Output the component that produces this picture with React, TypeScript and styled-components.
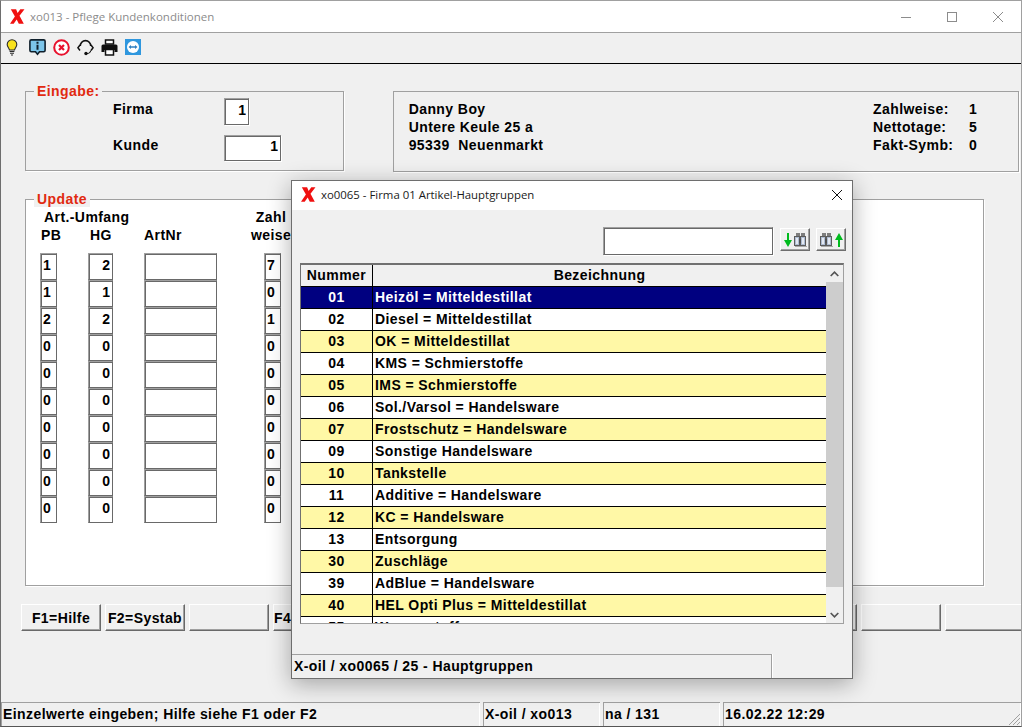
import React from "react";
import styled, { createGlobalStyle } from "styled-components";

const GlobalStyle = createGlobalStyle`
  html, body {
    margin: 0;
    padding: 0;
    background: #f0f0f0;
  }
  * {
    box-sizing: border-box;
  }
`;

const FONT = `"Liberation Sans", Arial, sans-serif`;
const UI_FONT = `"Open Sans", "Noto Sans", sans-serif`;
const TRACKING = "0.42px";

const Window = styled.div`
  position: relative;
  width: 1022px;
  height: 727px;
  overflow: hidden;
  display: flex;
  flex-direction: column;
  background: #f0f0f0;
  border-top: 1px solid #a0a0a0;
  border-left: 1px solid #6e6e6e;
  border-right: 1px solid #a0a0a0;
  border-bottom: 1px solid #555;
  font: bold 14px/18px ${FONT};
  letter-spacing: ${TRACKING};
  color: #000;
`;

const TitleBar = styled.div`
  flex: none;
  height: 32px;
  display: flex;
  align-items: center;
  background: #fff;
  border-bottom: 1px solid #a0a0a0;
  padding-left: 9px;
`;

const TitleText = styled.span<{ $dim?: boolean }>`
  margin-left: 5px;
  font: 400 ${(p) => (p.$dim ? "11.5px" : "11.4px")}/16px ${UI_FONT};
  letter-spacing: 0;
  color: ${(p) => (p.$dim ? "#8c8c8c" : "#1a1a1a")};
`;

const WindowControls = styled.div`
  margin-left: auto;
  display: flex;
  align-items: center;
  gap: 36px;
  padding-right: 18px;
`;

const Toolbar = styled.div`
  flex: none;
  height: 31px;
  display: flex;
  align-items: center;
  gap: 7px;
  padding: 0 0 2px 4px;
  border-bottom: 1px solid #000;
`;

const Body = styled.div`
  flex: 1;
  display: flex;
  flex-direction: column;
  padding: 19px 2px 0 24px;
`;

const TopRow = styled.div`
  display: flex;
  align-items: flex-start;
  gap: 49px;
`;

const Group = styled.fieldset<{ $w: number; $h: number; $fill?: string; $gapTop?: number }>`
  margin: ${(p) => p.$gapTop || 0}px 0 0;
  padding: 0;
  min-width: 0;
  width: ${(p) => p.$w}px;
  height: ${(p) => p.$h}px;
  border: 1px solid #a0a0a0;
  background: ${(p) => p.$fill || "transparent"};
  box-shadow: 1px 1px 0 #fff;
`;

const GroupTitle = styled.legend`
  margin-left: 8px;
  padding: 0 3px;
  background: #f0f0f0;
  color: #e12a10;
  font: bold 14px/16px ${FONT};
  letter-spacing: ${TRACKING};
`;

const EntryStack = styled.div`
  margin-top: -1px;
`;

const EntryRow = styled.div`
  display: flex;
  padding-left: 87px;
  margin-bottom: 10px;
`;

const EntryLabel = styled.span<{ $top: number }>`
  width: 111px;
  padding-top: ${(p) => p.$top}px;
`;

const Field = styled.input<{ $w: number; $h?: number; $right?: boolean }>`
  display: block;
  width: ${(p) => p.$w}px;
  height: ${(p) => p.$h || 27}px;
  margin: 0;
  padding: 0 2px 4px;
  outline: none;
  background: #fff;
  border: 1px solid;
  border-color: #a0a0a0 #696969 #696969 #a0a0a0;
  box-shadow: inset 1px 1px 0 #696969, 1px 1px 0 #fff;
  border-radius: 0;
  font: bold 14px/18px ${FONT};
  color: #000;
  text-align: ${(p) => (p.$right ? "right" : "left")};
`;

const InfoBox = styled.div`
  width: 627px;
  height: 81px;
  margin-top: 8px;
  display: flex;
  justify-content: space-between;
  padding: 8px 0 0 15px;
  border: 1px solid #a0a0a0;
  box-shadow: 1px 1px 0 #fff;
`;

const InfoLines = styled.div`
  display: flex;
  flex-direction: column;
`;

const TermsGrid = styled.div`
  width: 145px;
  display: grid;
  grid-template-columns: 96px 1fr;
  align-content: start;
`;

const UpdateHead = styled.div`
  display: grid;
  grid-template-columns: 48px 56px 105px 44px;
  padding: 1px 0 0 14px;
  margin-bottom: 9px;
`;

const HeadSpan = styled.span`
  grid-column: 1 / span 3;
  margin-left: 4px;
`;

const HeadCell = styled.span<{ $center?: boolean; $shift?: number }>`
  text-align: ${(p) => (p.$center ? "center" : "left")};
  margin-left: ${(p) => p.$shift || 0}px;
  white-space: nowrap;
`;

const UpdateRows = styled.div`
  display: grid;
  grid-template-columns: 48px 56px 120px 17px;
  padding-left: 14px;
`;

const FKeys = styled.div`
  display: flex;
  gap: 4px;
  margin: 18px 0 0 -4px;
`;

const FKey = styled.button`
  flex: none;
  width: 80px;
  height: 27px;
  padding: 0;
  background: #f0f0f0;
  border: 1px solid;
  border-color: #fff #696969 #696969 #fff;
  box-shadow: inset -1px -1px 0 #a0a0a0;
  border-radius: 0;
  font: bold 14px/18px ${FONT};
  letter-spacing: ${TRACKING};
  color: #000;
  white-space: nowrap;
  overflow: hidden;
`;

const StatusBar = styled.div`
  flex: none;
  height: 24px;
  display: flex;
  gap: 3px;
`;

const StatusCell = styled.div<{ $w: number }>`
  position: relative;
  width: ${(p) => p.$w}px;
  flex: ${(p) => (p.$w ? "none" : "1")};
  padding: 2px 0 0 1px;
  border-top: 1px solid #a0a0a0;
  border-left: 1px solid #a0a0a0;
  box-shadow: inset -1px 0 0 #fff;
  white-space: nowrap;
`;

const Grip = styled.svg`
  position: absolute;
  right: 0;
  bottom: 0;
`;

const Dialog = styled.div`
  position: absolute;
  left: 290px;
  top: 179px;
  width: 562px;
  height: 499px;
  display: flex;
  flex-direction: column;
  background: #f0f0f0;
  border: 1px solid #6e6e6e;
  box-shadow: 0 5px 22px rgba(0, 0, 0, 0.32);
`;

const DialogTitle = styled.div`
  flex: none;
  height: 29px;
  display: flex;
  align-items: center;
  padding: 0 10px 2px 9px;
  background: #fff;
`;

const CloseWrap = styled.div`
  margin-left: auto;
  display: flex;
`;

const SearchRow = styled.div`
  flex: none;
  display: flex;
  justify-content: flex-end;
  align-items: flex-start;
  gap: 6px;
  padding: 17px 6px 0 0;
  height: 53px;
`;

const SearchSlot = styled.div`
  margin-right: 1px;
`;

const SearchButton = styled.button`
  width: 30px;
  height: 23px;
  margin-top: 1px;
  padding: 0;
  display: flex;
  align-items: center;
  justify-content: center;
  background: #f0f0f0;
  border: 1px solid;
  border-color: #fff #6e6e6e #6e6e6e #fff;
  box-shadow: inset -1px -1px 0 #a0a0a0;
  border-radius: 0;
`;

const ListFrame = styled.div`
  flex: none;
  margin-left: 8px;
  width: 544px;
  height: 361px;
  display: flex;
  background: #fff;
  border: 1px solid;
  border-width: 2px 1px 1px;
  border-color: #707070 #a0a0a0 #a0a0a0 #707070;
  overflow: hidden;
`;

const ListBody = styled.div`
  flex: 1;
  min-width: 0;
  background: #fff;
`;

const ListHeader = styled.div`
  display: grid;
  grid-template-columns: 72px 1fr;
  height: 22px;
  background: #f0f0f0;
  border-bottom: 1px solid #000;
`;

const HeaderCell = styled.div<{ $last?: boolean }>`
  text-align: center;
  line-height: 20px;
  border-right: ${(p) => (p.$last ? "none" : "1px solid #000")};
`;

const ListRow = styled.div<{ $tone: "sel" | "alt" | "plain" }>`
  display: grid;
  grid-template-columns: 72px 1fr;
  height: 22px;
  border-bottom: 1px solid #000;
  line-height: 20px;
  background: ${(p) =>
    p.$tone === "sel" ? "#000080" : p.$tone === "alt" ? "#fff8a6" : "#fff"};
  color: ${(p) => (p.$tone === "sel" ? "#fff" : "#000")};
`;

const NumCell = styled.div`
  text-align: center;
  border-right: 1px solid #000;
`;

const TextCell = styled.div`
  padding-left: 2px;
  white-space: nowrap;
`;

const ScrollBar = styled.div`
  flex: none;
  width: 17px;
  display: flex;
  flex-direction: column;
  background: #f0f0f0;
`;

const ScrollButton = styled.div`
  flex: none;
  height: 17px;
  display: flex;
  align-items: center;
  justify-content: center;
`;

const ScrollThumb = styled.div`
  flex: none;
  height: 305px;
  background: #cdcdcd;
`;

const ScrollTrack = styled.div`
  flex: 1;
`;

const DialogStatus = styled.div`
  margin-top: auto;
  width: 480px;
  height: 24px;
  padding: 2px 0 0 2px;
  border-top: 1px solid #a0a0a0;
  border-right: 1px solid #a0a0a0;
  box-shadow: 1px 0 0 #fff;
  white-space: nowrap;
`;

const XLogo = () => (
  <svg width="15" height="15" viewBox="0 0 15 15">
    <path
      d="M.8 .3h5.300l1.500 3.700L10.300 .3h4.200L9.500 6.800l4.300 7.900H8.800L6.700 10.500l-3 4.200H0l4.900-7.300z"
      fill="#f01010"
    />
  </svg>
);

const Bulb = () => (
  <svg width="17" height="17" viewBox="0 0 17 17">
    <path
      d="M7 .8a4.800 4.800 0 0 0-4.800 4.800c0 2.200 1.700 3 2.300 5.400h5c.6-2.400 2.300-3.200 2.300-5.400A4.800 4.800 0 0 0 7 .8z"
      fill="#f9e21c"
      stroke="#2a2a2a"
      strokeWidth="1.100"
    />
    <path d="M4.600 12.500h4.800M5 14.200h4M6 16h2" stroke="#2a2a2a" strokeWidth="1.100" />
  </svg>
);

const InfoBubble = () => (
  <svg width="17" height="17" viewBox="0 0 17 17">
    <path
      d="M2.300 .9h12.400a1.400 1.400 0 0 1 1.400 1.400v9a1.400 1.400 0 0 1-1.400 1.400h-4.200l-2 2.600-2-2.600H2.300A1.400 1.400 0 0 1 .9 11.300v-9A1.400 1.400 0 0 1 2.300 .9z"
      fill="#7cc5ea"
      stroke="#10202c"
      strokeWidth="1.600"
    />
    <path d="M7.500 2.800h2v2h-2zM7.500 5.800h2v5h-2z" fill="#10202c" />
  </svg>
);

const StopCircle = () => (
  <svg width="17" height="17" viewBox="0 0 17 17">
    <circle cx="8.500" cy="8.500" r="7.300" fill="#fff" stroke="#e8112d" strokeWidth="2" />
    <path d="M6 6l5 5M11 6l-5 5" stroke="#e8112d" strokeWidth="2.200" />
  </svg>
);

const Headset = () => (
  <svg width="17" height="17" viewBox="0 0 17 17" fill="none">
    <path d="M3.200 7a5.300 5.300 0 0 1 10.600 0" stroke="#111" strokeWidth="1.700" />
    <path d="M3 6L.9 8.800 3 11.500M14 6l2.100 2.800L14 11.500" stroke="#111" strokeWidth="1.500" />
    <path d="M13.800 11.500c-.4 2-2.200 3-4 3" stroke="#111" strokeWidth="1.100" />
    <circle cx="9" cy="14.500" r="1.700" fill="#111" />
  </svg>
);

const Printer = () => (
  <svg width="17" height="17" viewBox="0 0 17 17">
    <path d="M4.500 1h8v4h-8z" fill="#fff" stroke="#111" strokeWidth="1.500" />
    <path d="M2 5.500h13a1.500 1.500 0 0 1 1.500 1.500v6h-3v-2h-10v2h-3V7A1.500 1.500 0 0 1 2 5.500z" fill="#111" />
    <path d="M4.500 10.500h8v5.500h-8z" fill="#fff" stroke="#111" strokeWidth="1.500" />
  </svg>
);

const TeamLink = () => (
  <svg width="16" height="16" viewBox="0 0 16 16">
    <rect width="16" height="16" fill="#2f97de" />
    <circle cx="8" cy="8" r="6" fill="#fff" />
    <path d="M3.500 8l2.500-2v1.200h4V6l2.500 2-2.500 2V8.800H6V10z" fill="#2f7fc0" />
  </svg>
);

const CloseGlyph = ({ color }: { color: string }) => (
  <svg width="10" height="10" viewBox="0 0 10 10" fill="none">
    <path d="M0 0l10 10M10 0L0 10" stroke={color} />
  </svg>
);

const Binoculars = () => (
  <g>
    <rect x="2" y="0" width="4" height="4" fill="#7d7d7d" />
    <rect x="7" y="0" width="4" height="4" fill="#7d7d7d" />
    <rect x=".5" y="3.500" width="5" height="9" fill="#aebcd2" stroke="#5c5c5c" />
    <rect x="6.500" y="3.500" width="5" height="9" fill="#aebcd2" stroke="#5c5c5c" />
    <rect x="2" y="5" width="2" height="6" fill="#e4e9f2" />
    <rect x="8" y="5" width="2" height="6" fill="#e4e9f2" />
    <rect x="5.500" y="6" width="1" height="4" fill="#444" />
    <rect x="1" y="13" width="12" height="1" fill="#a8a8a8" />
  </g>
);

const SearchDownIcon = () => (
  <svg width="23" height="14" viewBox="0 0 23 14">
    <path d="M3 0h2v7h3l-4 7-4-7h3z" fill="#00bb1e" />
    <g transform="translate(10 0)">
      <Binoculars />
    </g>
  </svg>
);

const SearchUpIcon = () => (
  <svg width="23" height="14" viewBox="0 0 23 14">
    <Binoculars />
    <g transform="translate(15 0)">
      <path d="M3 14h2V7h3L4 0 0 7h3z" fill="#00bb1e" />
    </g>
  </svg>
);

const Chevron = ({ up }: { up?: boolean }) => (
  <svg width="9" height="6" viewBox="0 0 9 6" fill="none">
    <path d={up ? "M.7 5l3.800-3.800L8.300 5" : "M.7 1l3.800 3.800L8.300 1"} stroke="#555" strokeWidth="1.700" />
  </svg>
);

const updateRows = [
  ["1", "2", "7"],
  ["1", "1", "0"],
  ["2", "2", "1"],
  ["0", "0", "0"],
  ["0", "0", "0"],
  ["0", "0", "0"],
  ["0", "0", "0"],
  ["0", "0", "0"],
  ["0", "0", "0"],
  ["0", "0", "0"],
];

const groups = [
  ["01", "Heizöl = Mitteldestillat"],
  ["02", "Diesel = Mitteldestillat"],
  ["03", "OK = Mitteldestillat"],
  ["04", "KMS = Schmierstoffe"],
  ["05", "IMS = Schmierstoffe"],
  ["06", "Sol./Varsol = Handelsware"],
  ["07", "Frostschutz = Handelsware"],
  ["09", "Sonstige Handelsware"],
  ["10", "Tankstelle"],
  ["11", "Additive = Handelsware"],
  ["12", "KC = Handelsware"],
  ["13", "Entsorgung"],
  ["30", "Zuschläge"],
  ["39", "AdBlue = Handelsware"],
  ["40", "HEL Opti Plus = Mitteldestillat"],
  ["55", "Wasserstoff"],
];

const fKeys = ["F1=Hilfe", "F2=Systab", "", "F4=Suchen", "", "", "", "", "", "", "", ""];

const keep = () => undefined;

export default function App() {
  return (
    <>
      <GlobalStyle />
      <Window>
        <TitleBar>
          <XLogo />
          <TitleText $dim>xo013 - Pflege Kundenkonditionen</TitleText>
          <WindowControls>
            <svg width="10" height="10" viewBox="0 0 10 10">
              <path d="M0 5.500h10" stroke="#8c8c8c" />
            </svg>
            <svg width="10" height="10" viewBox="0 0 10 10" fill="none">
              <rect x=".5" y=".5" width="9" height="9" stroke="#8c8c8c" />
            </svg>
            <CloseGlyph color="#8c8c8c" />
          </WindowControls>
        </TitleBar>
        <Toolbar>
          <Bulb />
          <InfoBubble />
          <StopCircle />
          <Headset />
          <Printer />
          <TeamLink />
        </Toolbar>
        <Body>
          <TopRow>
            <Group $w={319} $h={88}>
              <GroupTitle>Eingabe:</GroupTitle>
              <EntryStack>
                <EntryRow>
                  <EntryLabel $top={2}>Firma</EntryLabel>
                  <Field $w={25} readOnly value="1" onChange={keep} $right />
                </EntryRow>
                <EntryRow>
                  <EntryLabel $top={1}>Kunde</EntryLabel>
                  <Field $w={57} $h={26} readOnly value="1" onChange={keep} $right />
                </EntryRow>
              </EntryStack>
            </Group>
            <InfoBox>
              <InfoLines>
                <span>Danny Boy</span>
                <span>Untere Keule 25 a</span>
                <span>95339&nbsp; Neuenmarkt</span>
              </InfoLines>
              <TermsGrid>
                <span>Zahlweise:</span>
                <span>1</span>
                <span>Nettotage:</span>
                <span>5</span>
                <span>Fakt-Symb:</span>
                <span>0</span>
              </TermsGrid>
            </InfoBox>
          </TopRow>
          <Group $w={959} $h={395} $fill="#fff" $gapTop={19}>
            <GroupTitle>Update</GroupTitle>
            <UpdateHead>
              <HeadSpan>Art.-Umfang</HeadSpan>
              <HeadCell $center>Zahl</HeadCell>
              <HeadCell $shift={1}>PB</HeadCell>
              <HeadCell $shift={2}>HG</HeadCell>
              <HeadCell>ArtNr</HeadCell>
              <HeadCell $center>weise</HeadCell>
            </UpdateHead>
            <UpdateRows>
              {updateRows.map((r, i) => (
                <React.Fragment key={i}>
                  <Field $w={17} readOnly value={r[0]} onChange={keep} />
                  <Field $w={25} readOnly value={r[1]} onChange={keep} $right />
                  <Field $w={73} readOnly value="" onChange={keep} />
                  <Field $w={17} readOnly value={r[2]} onChange={keep} />
                </React.Fragment>
              ))}
            </UpdateRows>
          </Group>
          <FKeys>
            {fKeys.map((k, i) => (
              <FKey key={i}>{k}</FKey>
            ))}
          </FKeys>
        </Body>
        <StatusBar>
          <StatusCell $w={479}>Einzelwerte eingeben; Hilfe siehe F1 oder F2</StatusCell>
          <StatusCell $w={117}>X-oil / xo013</StatusCell>
          <StatusCell $w={117}>na / 131</StatusCell>
          <StatusCell $w={0}>
            16.02.22 12:29
            <Grip width="14" height="14" viewBox="0 0 14 14">
              <path d="M13 2L2 13M13 6l-7 7M13 10l-3 3" stroke="#a0a0a0" />
            </Grip>
          </StatusCell>
        </StatusBar>

        <Dialog>
          <DialogTitle>
            <XLogo />
            <TitleText>xo0065 - Firma 01 Artikel-Hauptgruppen</TitleText>
            <CloseWrap>
              <CloseGlyph color="#111" />
            </CloseWrap>
          </DialogTitle>
          <SearchRow>
            <SearchSlot>
              <Field $w={170} $h={28} readOnly value="" onChange={keep} />
            </SearchSlot>
            <SearchButton>
              <SearchDownIcon />
            </SearchButton>
            <SearchButton>
              <SearchUpIcon />
            </SearchButton>
          </SearchRow>
          <ListFrame>
            <ListBody>
              <ListHeader>
                <HeaderCell>Nummer</HeaderCell>
                <HeaderCell $last>Bezeichnung</HeaderCell>
              </ListHeader>
              {groups.map(([n, t], i) => (
                <ListRow key={n} $tone={i === 0 ? "sel" : i % 2 === 0 ? "alt" : "plain"}>
                  <NumCell>{n}</NumCell>
                  <TextCell>{t}</TextCell>
                </ListRow>
              ))}
            </ListBody>
            <ScrollBar>
              <ScrollButton>
                <Chevron up />
              </ScrollButton>
              <ScrollThumb />
              <ScrollTrack />
              <ScrollButton>
                <Chevron />
              </ScrollButton>
            </ScrollBar>
          </ListFrame>
          <DialogStatus>X-oil / xo0065 / 25 - Hauptgruppen</DialogStatus>
        </Dialog>
      </Window>
    </>
  );
}
